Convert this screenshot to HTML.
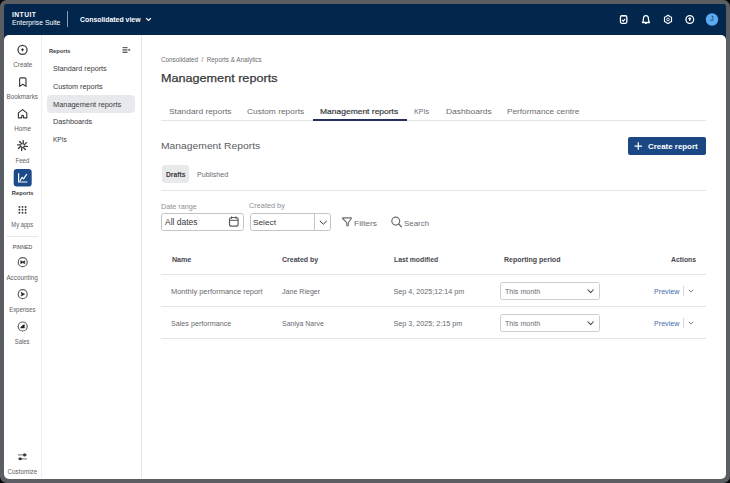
<!DOCTYPE html>
<html><head><meta charset="utf-8">
<style>
html,body{margin:0;padding:0;}
body{width:730px;height:483px;background:#000;position:relative;overflow:hidden;font-family:"Liberation Sans",sans-serif;}
.a{position:absolute;}
.t{position:absolute;white-space:nowrap;line-height:1;}
.hl{height:1px;background:#e4e5e7;left:161px;width:545px;}
svg{position:absolute;overflow:visible;}
</style></head><body>

<div class="a" style="left:0;top:0;width:730px;height:483px;background:#5a5e63;border-radius:6.5px;"></div>
<div class="a" style="left:4px;top:4px;width:722px;height:40px;background:#03264d;border-radius:2.5px 2.5px 0 0;"></div>
<div class="a" style="left:4px;top:35px;width:722px;height:443.5px;background:#fff;border-radius:5px;"></div>
<div class="a" style="left:67.3px;top:11.4px;width:1px;height:16px;background:rgba(255,255,255,0.55);"></div>
<div class="a" style="left:41px;top:35px;width:1px;height:443px;background:#eeeef0;"></div>
<div class="a" style="left:141px;top:35px;width:1px;height:443px;background:#e6e6e8;"></div>
<div class="a" style="left:47.2px;top:95.1px;width:87.6px;height:17.6px;background:#e8e9ec;border-radius:4px;"></div>
<div class="a hl" style="top:120px;"></div>
<div class="a" style="left:313px;top:118.9px;width:93.6px;height:2px;background:#232e62;"></div>
<div class="a" style="left:628.1px;top:137.1px;width:77.9px;height:17.5px;background:#1b4785;border-radius:2px;"></div>
<div class="a" style="left:161.5px;top:165px;width:27.1px;height:17.8px;background:#e8e9eb;border-radius:3px;"></div>
<div class="a hl" style="top:190.2px;"></div>
<div class="a" style="left:161.4px;top:213.1px;width:80.6px;height:16.1px;border:1px solid #c3c5c9;border-radius:2.5px;"></div>
<div class="a" style="left:249.6px;top:213.1px;width:79.8px;height:15.6px;border:1px solid #c3c5c9;border-radius:2.5px;"></div>
<div class="a" style="left:314px;top:213.1px;width:1px;height:17.6px;background:#c3c5c9;"></div>
<div class="a hl" style="top:274.3px;"></div>
<div class="a hl" style="top:306.2px;"></div>
<div class="a hl" style="top:338.1px;"></div>
<div class="a" style="left:500.4px;top:281.9px;width:97.4px;height:16.1px;border:1px solid #cbcdd0;border-radius:2.5px;"></div>
<div class="a" style="left:683.2px;top:286.4px;width:0.8px;height:9.5px;background:#d6d7da;"></div>
<div class="a" style="left:500.4px;top:314.3px;width:97.4px;height:15.9px;border:1px solid #cbcdd0;border-radius:2.5px;"></div>
<div class="a" style="left:683.2px;top:318.4px;width:0.8px;height:9.5px;background:#d6d7da;"></div>


<svg style="left:0;top:0" width="730" height="483">
  <path d="M146.1 18.1 L148.5 20.5 L150.9 18.1" fill="none" stroke="#fff" stroke-width="1.2"/>
  <rect x="620.45" y="15.75" width="6.4" height="7.6" rx="1.5" fill="none" stroke="#fff" stroke-width="1.3"/>
  <rect x="622.4" y="14.9" width="2.5" height="1.3" rx="0.5" fill="#fff"/>
  <path d="M622.2 20 L623.3 21.1 L625.2 18.9" fill="none" stroke="#fff" stroke-width="1.1"/>
  <path d="M642.4 22.5 C643.2 21.8 643.4 21 643.4 19.2 C643.4 17.1 644.5 15.6 645.95 15.6 C647.4 15.6 648.5 17.1 648.5 19.2 C648.5 21 648.7 21.8 649.5 22.5 Z" fill="none" stroke="#fff" stroke-width="1.3" stroke-linejoin="round"/>
  <ellipse cx="645.95" cy="23.4" rx="1" ry="0.7" fill="#fff"/>
  <path d="M666.33 16.50 Q668.00 14.30 669.67 16.50 Q672.42 16.85 671.35 19.40 Q672.42 21.95 669.67 22.30 Q668.00 24.50 666.33 22.30 Q663.58 21.95 664.65 19.40 Q663.58 16.85 666.33 16.50 Z" fill="none" stroke="#fff" stroke-width="1.15" stroke-linejoin="round"/>
  <circle cx="668" cy="19.4" r="1.35" fill="none" stroke="#fff" stroke-width="0.9"/>
  <circle cx="689.8" cy="19.45" r="3.85" fill="none" stroke="#fff" stroke-width="1.3"/>
  <path d="M688.5 18.3 C688.5 17.3 691.1 17.3 691.1 18.3 L690.2 21 H689.4 Z" fill="#fff"/>
  <circle cx="712" cy="19.5" r="6.2" fill="#5aaaf2"/>

  <circle cx="22.5" cy="49.8" r="4.55" fill="none" stroke="#393a3d" stroke-width="1.25"/>
  <path d="M22.5 48.3 V51.3 M21 49.8 H24" stroke="#393a3d" stroke-width="1.1"/>
  <path d="M19.6 86.4 V79.2 C19.6 78.4 20 77.9 20.8 77.9 H24.8 C25.6 77.9 26 78.4 26 79.2 V86.4 L22.8 84.2 Z" fill="none" stroke="#393a3d" stroke-width="1.15" stroke-linejoin="round"/>
  <path d="M18.4 117.8 V112.9 L22.6 109.6 L26.8 112.9 V117.8 H23.5 V116.3 C23.5 115.1 21.7 115.1 21.7 116.3 V117.8 Z" fill="none" stroke="#393a3d" stroke-width="1.15" stroke-linejoin="round"/>
  <path d="M23.20 143.85 L23.20 140.65 M24.18 144.88 L26.45 142.62 M24.15 146.30 L27.35 146.30 M23.12 147.28 L25.38 149.55 M21.70 147.25 L21.70 150.45 M20.72 146.22 L18.45 148.48 M20.75 144.80 L17.55 144.80 M21.78 143.82 L19.52 141.55" stroke="#393a3d" stroke-width="1.35" stroke-linecap="round" fill="none"/>
  <rect x="13.7" y="169" width="18" height="17.6" rx="3" fill="#1d4a88"/>
  <path d="M18.6 173.2 V182 H27.4" fill="none" stroke="#fff" stroke-width="1.2"/>
  <path d="M19.9 181 L22.2 177.3 L23.6 178.8 L26.8 174.2" fill="none" stroke="#fff" stroke-width="1.2" stroke-linejoin="round"/>
  <g fill="#393a3d"><circle cx="19.4" cy="206.9" r="0.95"/><circle cx="22.5" cy="206.9" r="0.95"/><circle cx="25.6" cy="206.9" r="0.95"/><circle cx="19.4" cy="209.8" r="0.95"/><circle cx="22.5" cy="209.8" r="0.95"/><circle cx="25.6" cy="209.8" r="0.95"/><circle cx="19.4" cy="212.7" r="0.95"/><circle cx="22.5" cy="212.7" r="0.95"/><circle cx="25.6" cy="212.7" r="0.95"/></g>
  <rect x="6.6" y="236" width="31.5" height="0.8" fill="#e3e3e5"/>
  <circle cx="22.7" cy="262.2" r="4.5" fill="none" stroke="#5f6065" stroke-width="1.2"/>
  <path d="M20.7 260.7 L22.7 261.8 L24.7 260.7 V263.7 L22.7 262.6 L20.7 263.7 Z" fill="#1e1f22" stroke="#1e1f22" stroke-width="0.5" stroke-linejoin="round"/>
  <circle cx="22.7" cy="294.2" r="4.5" fill="none" stroke="#5f6065" stroke-width="1.2"/>
  <path d="M21 292.3 L24.6 294.2 L21 296.1 L21.9 294.2 Z" fill="#1e1f22" stroke="#1e1f22" stroke-width="0.6" stroke-linejoin="round"/>
  <circle cx="22.7" cy="326.5" r="4.5" fill="none" stroke="#5f6065" stroke-width="1.2"/>
  <path d="M20.4 328.1 C21.5 326.2 22.8 325 24.4 324.6 V328.1 Z" fill="#1e1f22" stroke="#1e1f22" stroke-width="0.4" stroke-linejoin="round"/>
  <path d="M17.9 454.9 H26.9 M17.9 458.8 H26.9" stroke="#8a8b90" stroke-width="1.3"/>
  <circle cx="24.6" cy="454.9" r="1.55" fill="#393a3d"/>
  <circle cx="20.3" cy="458.8" r="1.55" fill="#393a3d"/>

  <path d="M122.5 47.5 H127.5 M122.5 49.3 H127.5 M122.5 50.9 H127.5 M122.5 52.5 H127.5" stroke="#393a3d" stroke-width="0.8"/>
  <path d="M128.8 49 L130.2 49.9 L128.8 50.8 Z" fill="#393a3d" stroke="#393a3d" stroke-width="0.5"/>

  <path d="M638.3 142.2 V149.8 M634.5 146 H642.1" stroke="#fff" stroke-width="1.25"/>

  <rect x="229.5" y="217.5" width="8.6" height="8.7" rx="2" fill="none" stroke="#5f6064" stroke-width="1.2"/>
  <path d="M229.5 220.3 H238.1" stroke="#5f6064" stroke-width="1.1"/>
  <path d="M231.6 216.8 V218.4 M236 216.8 V218.4" stroke="#5f6064" stroke-width="1.1" stroke-linecap="round"/>
  <path d="M319.8 220.8 L323.3 224.2 L326.8 220.8" fill="none" stroke="#393a3d" stroke-width="1.0"/>
  <path d="M342.9 217.9 H351 Q351.8 217.9 351.3 218.5 L348.3 222.7 V225.2 Q347.5 226.5 346.7 225.2 V222.7 L342.6 218.5 Q342.2 217.9 342.9 217.9 Z" fill="none" stroke="#6b6c72" stroke-width="1.1" stroke-linejoin="round"/>
  <circle cx="395.75" cy="221.1" r="3.95" fill="none" stroke="#6b6c72" stroke-width="1.2"/>
  <path d="M398.6 224 L401.4 226.7" stroke="#6b6c72" stroke-width="1.3" stroke-linecap="round"/>

  <path d="M587.6 289.5 L590.6 292.5 L593.6 289.5" fill="none" stroke="#393a3d" stroke-width="1.05"/>
  <path d="M587.6 321.5 L590.6 324.5 L593.6 321.5" fill="none" stroke="#393a3d" stroke-width="1.05"/>
  <path d="M688.8 289.9 L691 292.1 L693.2 289.9" fill="none" stroke="#6b6c72" stroke-width="0.9"/>
  <path d="M688.8 321.9 L691 324.1 L693.2 321.9" fill="none" stroke="#6b6c72" stroke-width="0.9"/>
</svg>

<div class="t" style="top:12.40px;font-size:6.5px;font-weight:700;color:#fff;letter-spacing:0.45px;left:11.54px;transform-origin:0 0;transform:scaleX(1.0272);">INTUIT</div>
<div class="t" style="top:20.06px;font-size:6.9px;font-weight:400;color:#fff;left:11.52px;transform-origin:0 0;transform:scaleX(0.9873);">Enterprise Suite</div>
<div class="t" style="top:16.32px;font-size:7.3px;font-weight:700;color:#fff;left:79.61px;transform-origin:0 0;transform:scaleX(0.9446);">Consolidated view</div>
<div class="t" style="top:16.41px;font-size:6.6px;font-weight:400;color:#163360;left:710.35px;transform-origin:50% 0;">J</div>
<div class="t" style="top:61.60px;font-size:6.5px;font-weight:400;color:#5d5e63;left:12.74px;transform-origin:50% 0;transform:scaleX(0.9830);">Create</div>
<div class="t" style="top:94.40px;font-size:6.5px;font-weight:400;color:#5d5e63;left:6.24px;transform-origin:50% 0;transform:scaleX(0.9650);">Bookmarks</div>
<div class="t" style="top:125.70px;font-size:6.5px;font-weight:400;color:#5d5e63;left:13.83px;transform-origin:50% 0;transform:scaleX(0.9673);">Home</div>
<div class="t" style="top:158.40px;font-size:6.5px;font-weight:400;color:#5d5e63;left:15.09px;transform-origin:50% 0;transform:scaleX(0.9420);">Feed</div>
<div class="t" style="top:189.75px;font-size:6.2px;font-weight:700;color:#393a3d;left:10.80px;transform-origin:50% 0;transform:scaleX(0.9253);">Reports</div>
<div class="t" style="top:221.50px;font-size:6.5px;font-weight:400;color:#5d5e63;left:10.21px;transform-origin:50% 0;transform:scaleX(0.8930);">My apps</div>
<div class="t" style="top:244.87px;font-size:5.0px;font-weight:400;color:#393a3d;left:13.05px;transform-origin:50% 0;transform:scaleX(1.0212);">PINNED</div>
<div class="t" style="top:274.60px;font-size:6.5px;font-weight:400;color:#5d5e63;left:6.41px;transform-origin:50% 0;transform:scaleX(0.9754);">Accounting</div>
<div class="t" style="top:307.30px;font-size:6.5px;font-weight:400;color:#5d5e63;left:8.23px;transform-origin:50% 0;transform:scaleX(0.9198);">Expenses</div>
<div class="t" style="top:339.10px;font-size:6.5px;font-weight:400;color:#5d5e63;left:14.37px;transform-origin:50% 0;transform:scaleX(0.9133);">Sales</div>
<div class="t" style="top:468.70px;font-size:6.5px;font-weight:400;color:#5d5e63;left:7.14px;transform-origin:50% 0;transform:scaleX(0.9628);">Customize</div>
<div class="t" style="top:47.72px;font-size:6.0px;font-weight:700;color:#393a3d;left:48.96px;transform-origin:0 0;transform:scaleX(0.9502);">Reports</div>
<div class="t" style="top:64.64px;font-size:7.4px;font-weight:400;color:#393a3d;left:53.00px;transform-origin:0 0;transform:scaleX(0.9759);">Standard reports</div>
<div class="t" style="top:82.54px;font-size:7.4px;font-weight:400;color:#393a3d;left:53.00px;transform-origin:0 0;transform:scaleX(0.9843);">Custom reports</div>
<div class="t" style="top:100.64px;font-size:7.4px;font-weight:400;color:#393a3d;left:53.00px;transform-origin:0 0;">Management reports</div>
<div class="t" style="top:118.24px;font-size:7.4px;font-weight:400;color:#393a3d;left:53.00px;transform-origin:0 0;transform:scaleX(0.9844);">Dashboards</div>
<div class="t" style="top:136.14px;font-size:7.4px;font-weight:400;color:#393a3d;left:53.00px;transform-origin:0 0;transform:scaleX(0.8836);">KPIs</div>
<div class="t" style="top:57.28px;font-size:6.4px;font-weight:400;color:#6b6c72;white-space:pre;left:161.44px;transform-origin:0 0;transform:scaleX(0.9910);">Consolidated  /  Reports &amp; Analytics</div>
<div class="t" style="top:73.43px;font-size:11.3px;font-weight:400;color:#393a3d;-webkit-text-stroke:0.25px #393a3d;left:161.25px;transform-origin:0 0;transform:scaleX(1.1171);">Management reports</div>
<div class="t" style="top:108.14px;font-size:8.1px;font-weight:400;color:#6b6c72;left:169.28px;transform-origin:0 0;transform:scaleX(1.0366);">Standard reports</div>
<div class="t" style="top:108.14px;font-size:8.1px;font-weight:400;color:#6b6c72;left:247.18px;transform-origin:0 0;transform:scaleX(1.0339);">Custom reports</div>
<div class="t" style="top:108.14px;font-size:8.1px;font-weight:400;color:#393a3d;-webkit-text-stroke:0.2px #393a3d;left:320.38px;transform-origin:0 0;transform:scaleX(1.0471);">Management reports</div>
<div class="t" style="top:108.14px;font-size:8.1px;font-weight:400;color:#6b6c72;left:414.48px;transform-origin:0 0;transform:scaleX(0.8851);">KPIs</div>
<div class="t" style="top:108.14px;font-size:8.1px;font-weight:400;color:#6b6c72;left:446.08px;transform-origin:0 0;transform:scaleX(1.0470);">Dashboards</div>
<div class="t" style="top:108.14px;font-size:8.1px;font-weight:400;color:#6b6c72;left:506.98px;transform-origin:0 0;transform:scaleX(1.0185);">Performance centre</div>
<div class="t" style="top:141.53px;font-size:9.3px;font-weight:400;color:#5b5c61;left:161.33px;transform-origin:0 0;transform:scaleX(1.1098);">Management Reports</div>
<div class="t" style="top:142.54px;font-size:7.4px;font-weight:700;color:#fff;left:648.10px;transform-origin:0 0;transform:scaleX(1.0701);">Create report</div>
<div class="t" style="top:172.11px;font-size:6.6px;font-weight:700;color:#393a3d;left:165.54px;transform-origin:0 0;transform:scaleX(1.0232);">Drafts</div>
<div class="t" style="top:170.77px;font-size:7.0px;font-weight:400;color:#6b6c72;left:197.12px;transform-origin:0 0;transform:scaleX(1.0122);">Published</div>
<div class="t" style="top:202.67px;font-size:7.0px;font-weight:400;color:#8d9096;left:161.32px;transform-origin:0 0;transform:scaleX(1.0345);">Date range</div>
<div class="t" style="top:201.57px;font-size:7.0px;font-weight:400;color:#8d9096;left:249.42px;transform-origin:0 0;transform:scaleX(1.0464);">Created by</div>
<div class="t" style="top:218.17px;font-size:8.3px;font-weight:400;color:#393a3d;left:165.17px;transform-origin:0 0;transform:scaleX(1.0182);">All dates</div>
<div class="t" style="top:218.54px;font-size:8.1px;font-weight:400;color:#393a3d;left:253.38px;transform-origin:0 0;transform:scaleX(1.0221);">Select</div>
<div class="t" style="top:219.93px;font-size:8.0px;font-weight:400;color:#6b6c72;left:354.18px;transform-origin:0 0;transform:scaleX(1.0563);">Filters</div>
<div class="t" style="top:219.93px;font-size:8.0px;font-weight:400;color:#6b6c72;left:404.08px;transform-origin:0 0;transform:scaleX(0.9888);">Search</div>
<div class="t" style="top:257.06px;font-size:6.9px;font-weight:700;color:#45464b;left:171.62px;transform-origin:0 0;transform:scaleX(1.0290);">Name</div>
<div class="t" style="top:257.06px;font-size:6.9px;font-weight:700;color:#45464b;left:282.22px;transform-origin:0 0;transform:scaleX(1.0167);">Created by</div>
<div class="t" style="top:257.06px;font-size:6.9px;font-weight:700;color:#45464b;left:393.52px;transform-origin:0 0;transform:scaleX(0.9846);">Last modified</div>
<div class="t" style="top:257.06px;font-size:6.9px;font-weight:700;color:#45464b;left:504.12px;transform-origin:0 0;transform:scaleX(1.0163);">Reporting period</div>
<div class="t" style="top:257.06px;font-size:6.9px;font-weight:700;color:#45464b;left:671.32px;transform-origin:0 0;transform:scaleX(0.9933);">Actions</div>
<div class="t" style="top:287.71px;font-size:7.2px;font-weight:400;color:#68696e;left:170.91px;transform-origin:0 0;transform:scaleX(1.0380);">Monthly performance report</div>
<div class="t" style="top:287.71px;font-size:7.2px;font-weight:400;color:#68696e;left:282.31px;transform-origin:0 0;transform:scaleX(0.9835);">Jane Rieger</div>
<div class="t" style="top:287.71px;font-size:7.2px;font-weight:400;color:#68696e;left:393.51px;transform-origin:0 0;">Sep 4, 2025;12:14 pm</div>
<div class="t" style="top:287.57px;font-size:7.0px;font-weight:400;color:#68696e;left:504.82px;transform-origin:0 0;transform:scaleX(1.0145);">This month</div>
<div class="t" style="top:287.57px;font-size:7.0px;font-weight:400;color:#3d6cae;left:653.82px;transform-origin:0 0;transform:scaleX(1.0210);">Preview</div>
<div class="t" style="top:319.91px;font-size:7.2px;font-weight:400;color:#68696e;left:170.91px;transform-origin:0 0;">Sales performance</div>
<div class="t" style="top:319.91px;font-size:7.2px;font-weight:400;color:#68696e;left:282.31px;transform-origin:0 0;transform:scaleX(0.9690);">Saniya Narve</div>
<div class="t" style="top:319.91px;font-size:7.2px;font-weight:400;color:#68696e;left:393.51px;transform-origin:0 0;">Sep 3, 2025; 2:15 pm</div>
<div class="t" style="top:319.77px;font-size:7.0px;font-weight:400;color:#68696e;left:504.82px;transform-origin:0 0;transform:scaleX(1.0145);">This month</div>
<div class="t" style="top:319.77px;font-size:7.0px;font-weight:400;color:#3d6cae;left:653.82px;transform-origin:0 0;transform:scaleX(1.0210);">Preview</div>
</body></html>
